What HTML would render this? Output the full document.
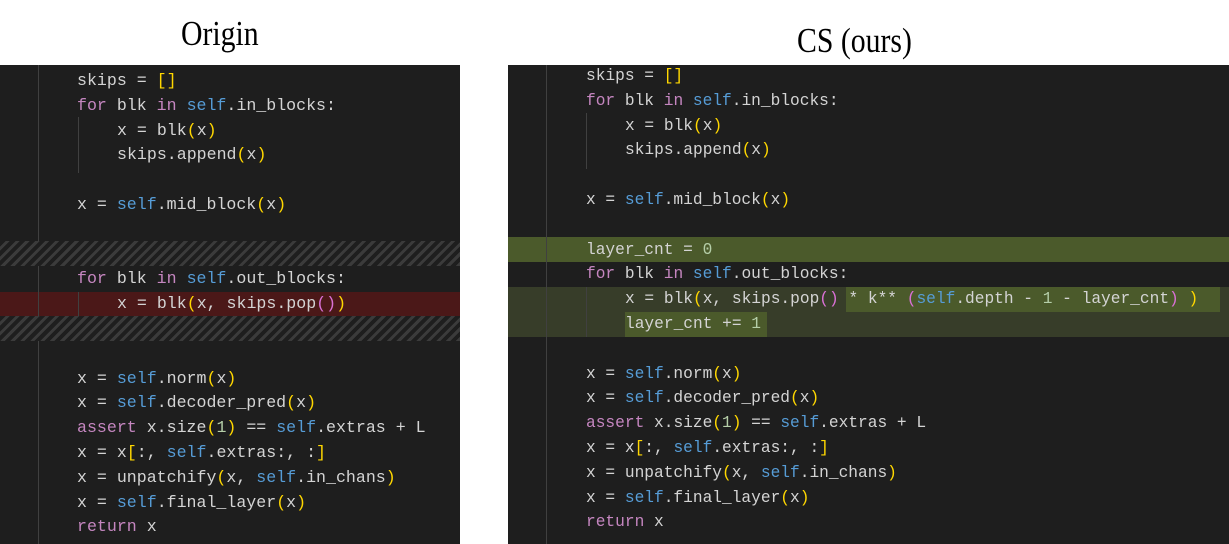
<!DOCTYPE html>
<html><head><meta charset="utf-8"><style>
*{margin:0;padding:0}
body{width:1229px;height:544px;background:#fff;position:relative;overflow:hidden}
.t{position:absolute;font-family:"Liberation Serif",serif;font-size:35px;color:#000;transform:scaleX(.85);transform-origin:left top}
.p{position:absolute;top:65px;height:479px;background:#1e1e1e;overflow:hidden}
.l{position:absolute;left:0;right:0;height:25px;line-height:25px;white-space:pre;font-family:"Liberation Mono",monospace;color:#d4d4d4}
#L .l{font-size:16.6px}
#R .l{font-size:16.2px}
.k{color:#c586c0}.s{color:#569cd6}.y{color:#ffd700}.m{color:#da70d6}.n{color:#b5cea8}
.h{position:absolute;left:0;right:0;height:25px;background:repeating-linear-gradient(135deg,#1e1e1e 0 4px,#3b3b3b 4px 7px)}
.g{position:absolute;width:1px;background:#404040}
.hi{background:#4b5a2b}
</style></head><body>
<div class="t" style="left:181px;top:14px">Origin</div>
<div class="t" style="left:797px;top:21px">CS (ours)</div>

<div class="p" id="L" style="left:0;width:460px">
<div class="h" style="top:176px"></div>
<div style="position:absolute;left:0;right:0;top:227px;height:24px;background:#4b1818"></div>
<div class="h" style="top:251px"></div>
<div class="g" style="left:38px;top:0;height:176px"></div>
<div class="g" style="left:38px;top:201px;height:50px"></div>
<div class="g" style="left:38px;top:276px;height:203px"></div>
<div class="g" style="left:78px;top:52px;height:56px"></div>
<div class="g" style="left:78px;top:227px;height:24px"></div>
<div style="position:absolute;left:0;top:3px;right:0">
<div class="l" style="top:0;left:77px">skips = <span class="y">[]</span></div>
<div class="l" style="top:24.8px;left:77px"><span class="k">for</span> blk <span class="k">in</span> <span class="s">self</span>.in_blocks:</div>
<div class="l" style="top:49.6px;left:117px">x = blk<span class="y">(</span>x<span class="y">)</span></div>
<div class="l" style="top:74.4px;left:117px">skips.append<span class="y">(</span>x<span class="y">)</span></div>
<div class="l" style="top:124px;left:77px">x = <span class="s">self</span>.mid_block<span class="y">(</span>x<span class="y">)</span></div>
<div class="l" style="top:198.4px;left:77px"><span class="k">for</span> blk <span class="k">in</span> <span class="s">self</span>.out_blocks:</div>
<div class="l" style="top:223.2px;left:117px">x = blk<span class="y">(</span>x, skips.pop<span class="m">()</span><span class="y">)</span></div>
<div class="l" style="top:297.6px;left:77px">x = <span class="s">self</span>.norm<span class="y">(</span>x<span class="y">)</span></div>
<div class="l" style="top:322.4px;left:77px">x = <span class="s">self</span>.decoder_pred<span class="y">(</span>x<span class="y">)</span></div>
<div class="l" style="top:347.2px;left:77px"><span class="k">assert</span> x.size<span class="y">(</span><span class="n">1</span><span class="y">)</span> == <span class="s">self</span>.extras + L</div>
<div class="l" style="top:372px;left:77px">x = x<span class="y">[</span>:, <span class="s">self</span>.extras:, :<span class="y">]</span></div>
<div class="l" style="top:396.8px;left:77px">x = unpatchify<span class="y">(</span>x, <span class="s">self</span>.in_chans<span class="y">)</span></div>
<div class="l" style="top:421.6px;left:77px">x = <span class="s">self</span>.final_layer<span class="y">(</span>x<span class="y">)</span></div>
<div class="l" style="top:446.4px;left:77px"><span class="k">return</span> x</div>
</div>
</div>

<div class="p" id="R" style="left:508px;width:721px">
<div style="position:absolute;left:0;right:0;top:172px;height:25px;background:#4b5a2b"></div>
<div style="position:absolute;left:0;right:0;top:222px;height:50px;background:#373d29"></div>
<div class="hi" style="position:absolute;left:338px;width:374px;top:222px;height:25px"></div>
<div class="hi" style="position:absolute;left:117px;width:142px;top:247px;height:25px"></div>
<div class="g" style="left:38px;top:0;height:479px"></div>
<div class="g" style="left:78px;top:48px;height:56px"></div>
<div class="g" style="left:78px;top:222px;height:50px"></div>
<div style="position:absolute;left:0;top:-1px;right:0">
<div class="l" style="top:0;left:78px">skips = <span class="y">[]</span></div>
<div class="l" style="top:24.8px;left:78px"><span class="k">for</span> blk <span class="k">in</span> <span class="s">self</span>.in_blocks:</div>
<div class="l" style="top:49.6px;left:117px">x = blk<span class="y">(</span>x<span class="y">)</span></div>
<div class="l" style="top:74.4px;left:117px">skips.append<span class="y">(</span>x<span class="y">)</span></div>
<div class="l" style="top:124px;left:78px">x = <span class="s">self</span>.mid_block<span class="y">(</span>x<span class="y">)</span></div>
<div class="l" style="top:173.6px;left:78px">layer_cnt = <span class="n">0</span></div>
<div class="l" style="top:198.4px;left:78px"><span class="k">for</span> blk <span class="k">in</span> <span class="s">self</span>.out_blocks:</div>
<div class="l" style="top:223.2px;left:117px">x = blk<span class="y">(</span>x, skips.pop<span class="m">()</span> * k** <span class="m">(</span><span class="s">self</span>.depth - <span class="n">1</span> - layer_cnt<span class="m">)</span> <span class="y">)</span></div>
<div class="l" style="top:248px;left:117px">layer_cnt += <span class="n">1</span></div>
<div class="l" style="top:297.6px;left:78px">x = <span class="s">self</span>.norm<span class="y">(</span>x<span class="y">)</span></div>
<div class="l" style="top:322.4px;left:78px">x = <span class="s">self</span>.decoder_pred<span class="y">(</span>x<span class="y">)</span></div>
<div class="l" style="top:347.2px;left:78px"><span class="k">assert</span> x.size<span class="y">(</span><span class="n">1</span><span class="y">)</span> == <span class="s">self</span>.extras + L</div>
<div class="l" style="top:372px;left:78px">x = x<span class="y">[</span>:, <span class="s">self</span>.extras:, :<span class="y">]</span></div>
<div class="l" style="top:396.8px;left:78px">x = unpatchify<span class="y">(</span>x, <span class="s">self</span>.in_chans<span class="y">)</span></div>
<div class="l" style="top:421.6px;left:78px">x = <span class="s">self</span>.final_layer<span class="y">(</span>x<span class="y">)</span></div>
<div class="l" style="top:446.4px;left:78px"><span class="k">return</span> x</div>
</div>
</div>
</body></html>
